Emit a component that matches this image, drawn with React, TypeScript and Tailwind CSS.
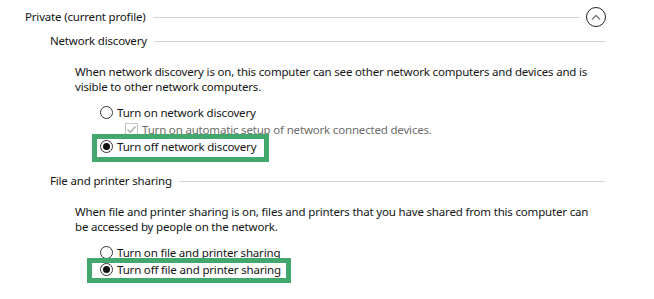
const Radio = ({ checked }: { checked?: boolean }) => (
  <span className="w-[13px] h-[13px] rounded-full border border-[#333] bg-white flex items-center justify-center shrink-0">
    {checked && <span className="w-[7px] h-[7px] rounded-full bg-[#111]" />}
  </span>
);

const Checkbox = () => (
  <span className="w-[13px] h-[13px] border border-[#c4c4c4] bg-white flex items-center justify-center shrink-0">
    <svg width="11" height="11" viewBox="0 0 11 11">
      <path d="M1.5 5.5 L4.2 8.2 L9.5 2.5" fill="none" stroke="#a8a8a8" strokeWidth="1.3" />
    </svg>
  </span>
);

const Section = ({ title, className }: { title: string; className: string }) => (
  <div className={`flex items-center h-[20px] ${className}`}>
    <span className="whitespace-nowrap">{title}</span>
    <span className="flex-1 h-px bg-[#d4d4d4] ml-[7px]" />
  </div>
);

const Option = ({
  label,
  checked,
  highlight,
}: {
  label: string;
  checked?: boolean;
  highlight?: string;
}) => (
  <div className="relative flex items-center gap-[4px] h-[17px] pl-[100px]">
    {highlight && <div className={`absolute border-[5px] border-[#42a86e] ${highlight}`} />}
    <Radio checked={checked} />
    <span className="whitespace-nowrap">{label}</span>
  </div>
);

export default function App() {
  return (
    <div
      className="w-[654px] h-[299px] bg-white text-[#141414] text-[11.5px] tracking-[-0.18px] overflow-hidden"
      style={{ fontFamily: '"Noto Sans", "Open Sans", sans-serif' }}
    >
      {/* profile header */}
      <div className="flex items-center h-[22px] mt-[6px] pl-[25px] pr-[48px]">
        <span className="whitespace-nowrap">Private (current profile)</span>
        <span className="flex-1 h-px bg-[#d4d4d4] ml-[7px] mr-[6px]" />
        <span className="w-[20px] h-[20px] rounded-full border border-[#222] flex items-center justify-center">
          <svg width="10" height="7" viewBox="0 0 10 7">
            <path d="M1 5.5 L5 1.5 L9 5.5" fill="none" stroke="#777" strokeWidth="1.4" />
          </svg>
        </span>
      </div>

      <Section title="Network discovery" className="mt-[3px] pl-[50px] pr-[49px]" />

      <p className="mt-[13px] pl-[75px] leading-[15px] whitespace-nowrap">
        When network discovery is on, this computer can see other network computers and devices and is
        <br />
        visible to other network computers.
      </p>

      <div className="mt-[10px]">
        <Option label="Turn on network discovery" />
        <div className="flex items-center gap-[4px] h-[17px] pl-[125px] text-[#6d6d6d]">
          <Checkbox />
          <span className="whitespace-nowrap">Turn on automatic setup of network connected devices.</span>
        </div>
        <Option
          label="Turn off network discovery"
          checked
          highlight="left-[92px] w-[177px] -top-[4px] h-[28px]"
        />
      </div>

      <Section title="File and printer sharing" className="mt-[16px] pl-[50px] pr-[49px]" />

      <p className="mt-[13px] pl-[75px] leading-[15px] whitespace-nowrap">
        When file and printer sharing is on, files and printers that you have shared from this computer can
        <br />
        be accessed by people on the network.
      </p>

      <div className="mt-[10px]">
        <Option label="Turn on file and printer sharing" />
        <Option
          label="Turn off file and printer sharing"
          checked
          highlight="left-[87px] w-[204px] -top-[3px] h-[25px]"
        />
      </div>
    </div>
  );
}
